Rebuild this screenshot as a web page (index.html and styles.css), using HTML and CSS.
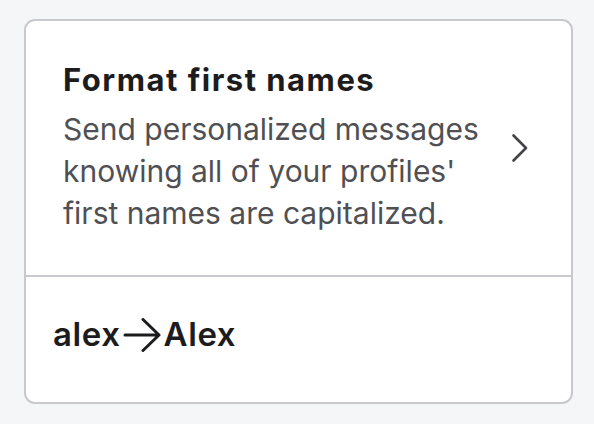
FILE: index.html
```html
<!DOCTYPE html>
<html lang="en">
<head>
  <meta charset="UTF-8" />
  <meta name="viewport" content="width=device-width, initial-scale=1.0"/>
  <title>Format first names</title>
  <link rel="stylesheet" href="styles.css">
</head>
<body>
  <div class="card">
    <a class="card-top" href="#">
      <div class="text">
        <h2>Format first names</h2>
        <p>Send personalized messages knowing all of your profiles' first names are capitalized.</p>
      </div>
      <svg class="chevron" width="18" height="30" viewBox="0 0 18 30">
        <path d="M2.5 2.5 L15 15 L2.5 27.5" fill="none" stroke="#444448" stroke-width="2.6" stroke-linecap="round" stroke-linejoin="round"/>
      </svg>
    </a>
    <div class="example">
      <span>alex</span>
      <svg class="arrow" width="39" height="34" viewBox="0 0 39 34" aria-label="to">
        <path d="M2 17 H36 M20 1.5 L36 17 L20 32.5" fill="none" stroke="#1c1c1e" stroke-width="3" stroke-linecap="round" stroke-linejoin="round"/>
      </svg>
      <span>Alex</span>
    </div>
  </div>
</body>
</html>
```

FILE: styles.css
```css
* {
  box-sizing: border-box;
}

body {
  margin: 0;
  padding: 19px 21px 21px 24px;
  font-family: 'Inter', 'Noto Sans', sans-serif;
  background: #f5f6f8;
  color: #1c1c1e;
}

.card {
  background: #fff;
  border: 2px solid #c9c9cd;
  border-radius: 11px;
  height: 385px;
  display: flex;
  flex-direction: column;
}

.card-top {
  display: flex;
  align-items: center;
  justify-content: space-between;
  padding: 0 42px 0 37px;
  height: 256px;
  border-bottom: 2px solid #c9c9cd;
  color: inherit;
  text-decoration: none;
}

.text {
  width: 425px;
}

h2 {
  margin: 0 0 10px;
  font-size: 31px;
  font-weight: 650;
  line-height: 36px;
  letter-spacing: 1.5px;
}

p {
  margin: 0;
  font-size: 30px;
  line-height: 42px;
  color: #505054;
}

.chevron {
  flex-shrink: 0;
}

.example {
  flex: 1;
  display: flex;
  align-items: center;
  gap: 2px;
  padding: 0 27px 12px;
  font-size: 33px;
  font-weight: 600;
  letter-spacing: 0.6px;
}

.arrow {
  margin-top: 2px;
}
```
